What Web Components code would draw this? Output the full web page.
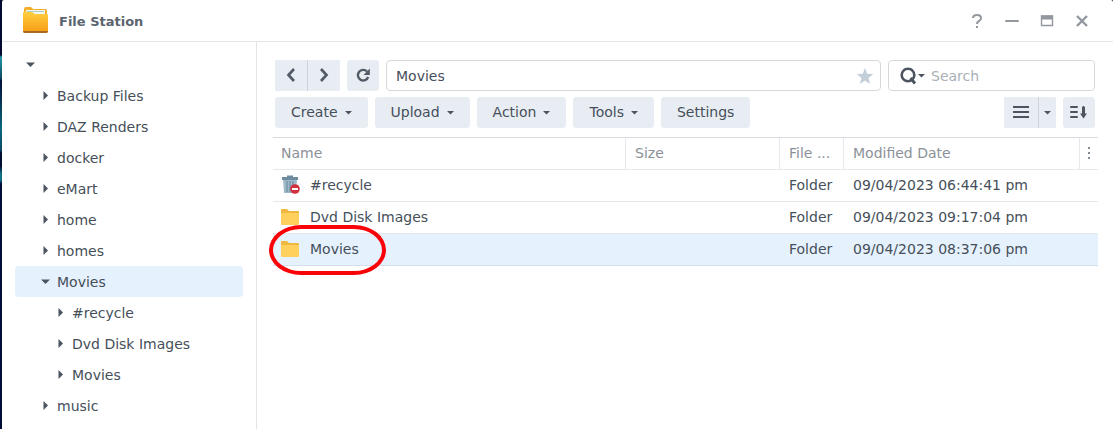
<!DOCTYPE html>
<html lang="en">
<head>
<meta charset="utf-8">
<meta name="viewport" content="width=device-width, initial-scale=1">
<title>File Station</title>
<style>
	body {
		margin: 0;
		min-height: 100vh;
		display: flex;
		font-family: "DejaVu Sans", Verdana, sans-serif;
		font-size: 14px;
		color: #464f59;
		background: linear-gradient(#020a33 0 55px, #2396aa 57px, #0d4a63 78px, #00103a 81px, #083050 100px, #0a6680 128px, #0a4a68 150px, #000c30 153px 166px, #0f7088 174px 180px, #000c38 184px);
	}

	fs-window {
		flex: 1;
		margin-left: 2px;
	}
</style>
</head>
<body>
	<fs-window heading="File Station">
		<fs-tree slot="sidebar">
			<fs-tree-item level="0" open></fs-tree-item>
			<fs-tree-item level="1">Backup Files</fs-tree-item>
			<fs-tree-item level="1">DAZ Renders</fs-tree-item>
			<fs-tree-item level="1">docker</fs-tree-item>
			<fs-tree-item level="1">eMart</fs-tree-item>
			<fs-tree-item level="1">home</fs-tree-item>
			<fs-tree-item level="1">homes</fs-tree-item>
			<fs-tree-item level="1" open selected>Movies</fs-tree-item>
			<fs-tree-item level="2">#recycle</fs-tree-item>
			<fs-tree-item level="2">Dvd Disk Images</fs-tree-item>
			<fs-tree-item level="2">Movies</fs-tree-item>
			<fs-tree-item level="1">music</fs-tree-item>
		</fs-tree>
		<fs-toolbar></fs-toolbar>
		<fs-file-table></fs-file-table>
	</fs-window>

<script>
	const icons = {
		app: [27, 27, `
			<defs>
				<linearGradient id="front" x1="0" y1="0" x2="0" y2="1">
					<stop offset="0" stop-color="#ffcf40"/>
					<stop offset="1" stop-color="#f79a12"/>
				</linearGradient>
			</defs>
			<path d="M2 2q0-2 2-2h5l2 2h12q2 0 2 2v18H2z" fill="#f2ad2c"/>
			<path d="M4 3h19v6H4z" fill="#f3f8ee"/>
			<path d="M5 4.500h17" stroke="#a8cfc0" stroke-width="1"/>
			<path d="M1 6q0-1 1-1h8l3 2h12q1 0 1 1v16q0 2-2 2H3q-2 0-2-2z" fill="url(#front)"/>
			<path d="M1 24h25q0 2-2 2H3q-2 0-2-2z" fill="#a66b22"/>`],
		help: [14, 16, '<path d="M3 5q0-3 4-3t4 3q0 2-2 3t-2 3M7 13v2" fill="none" stroke="#92989e" stroke-width="2"/>'],
		minimize: [14, 16, '<path d="M1 8h12" stroke="#92989e" stroke-width="2" stroke-linecap="round"/>'],
		maximize: [14, 16, '<path d="M1.500 3h11v9.500h-11z" fill="#fff" stroke="#92989e" stroke-width="1.400"/><path d="M1 2.500h12v4H1z" fill="#92989e"/>'],
		close: [14, 16, '<path d="M2 3l10 10m0-10L2 13" stroke="#92989e" stroke-width="2.400"/>'],
		down: [9, 9, '<path d="M0 2.500h9L4.500 7z" fill="#4c555f"/>'],
		right: [9, 9, '<path d="M2.500 0L7 4.500 2.500 9z" fill="#4c555f"/>'],
		caret: [7, 5, '<path d="M0 1h7L3.500 4.500z" fill="#4c555f"/>'],
		back: [16, 16, '<path d="M11 2L5.500 8l5.500 6" fill="none" stroke="#535c66" stroke-width="2.700"/>'],
		forward: [16, 16, '<path d="M5 2l5.500 6L5 14" fill="none" stroke="#535c66" stroke-width="2.700"/>'],
		refresh: [16, 16, '<path d="M12 4.500A5.300 5.300 0 1 0 13.200 10" fill="none" stroke="#535c66" stroke-width="2.400"/><path d="M14.800 1.500V8H8.500z" fill="#535c66"/>'],
		star: [18, 18, '<path d="M9 1l2.200 5.700 6 .3-4.700 3.900 1.600 6L9 13.500l-5.100 3.400 1.600-6L.8 7l6-.3z" fill="#c3ced8"/>'],
		search: [17, 18, '<circle cx="8" cy="8" r="6.300" fill="none" stroke="#4c555f" stroke-width="2.600"/><path d="M10.500 11l4.500 5.500" stroke="#4c555f" stroke-width="2.800"/>'],
		list: [16, 14, '<path d="M0 2h16M0 7h16M0 12h16" stroke="#4c555f" stroke-width="2"/>'],
		sort: [18, 14, '<path d="M1 2h6M1 7h6M1 12h6" stroke="#4c555f" stroke-width="2" stroke-linecap="round"/><path d="M13.500 2.500v7" stroke="#4c555f" stroke-width="3" stroke-linecap="round"/><path d="M10 8.500h7L13.500 13.500z" fill="#4c555f"/>'],
		more: [3, 13, '<path d="M0 1h2v2H0zm0 5h2v2H0zm0 5h2v2H0z" fill="#858c93"/>'],
		folder: [18, 16, '<path d="M0 1q0-1 1-1h5l2 2h9q1 0 1 1v11H0z" fill="#efb93f"/><path d="M0 4h18v11q0 1-1 1H1q-1 0-1-1z" fill="#ffd05b"/>'],
		recycle: [19, 19, `
			<path d="M2 4h14l-1 14H3z" fill="#9fb9c9"/>
			<path d="M6 6v11M9 6v11M12 6v11" stroke="#7896a9" stroke-width="1.500"/>
			<path d="M1 2h5V.500h6V2h5v3H1z" fill="#6e8c9f"/>
			<circle cx="14" cy="14" r="4.800" fill="#d22f3c"/>
			<path d="M11 14h6" stroke="#fff" stroke-width="2"/>`]
	}

	class FsIcon extends HTMLElement {
		connectedCallback () {
			if (this.shadowRoot) return
			const [width, height, shapes] = icons[this.getAttribute('name')]
			this.attachShadow({ mode: 'open' }).innerHTML = `
				<style>
					:host { display: inline-flex; flex: none; }
					svg { display: block; }
				</style>
				<svg width="${width}" height="${height}" viewBox="0 0 ${width} ${height}" aria-hidden="true">${shapes}</svg>
			`
		}
	}
	customElements.define('fs-icon', FsIcon)

	class FsWindow extends HTMLElement {
		constructor () {
			super()
			this.attachShadow({ mode: 'open' }).innerHTML = `
				<style>
					:host {
						display: flex;
						flex-direction: column;
						background: #fff;
						border-radius: 2px 2px 0 0;
						overflow: hidden;
					}

					header {
						display: flex;
						align-items: center;
						height: 41px;
						padding: 0 24px 0 20px;
						border-bottom: 1px solid #e1e3e6;
					}

					h1 {
						flex: 1;
						margin: 0 0 0 10px;
						font-size: 13px;
						line-height: 20px;
						color: #5c656f;
						padding-top: 2px;
					}

					nav {
						display: flex;
						gap: 21px;
					}

					nav button {
						display: flex;
						padding: 0;
						border: 0;
						background: none;
					}

					.content {
						flex: 1;
						display: flex;
					}

					aside {
						flex: 0 0 254px;
						border-right: 1px solid #e1e3e6;
					}

					main {
						flex: 1;
						min-width: 0;
						padding: 18px 15px 0 16px;
					}
				</style>

				<header>
					<fs-icon name="app"></fs-icon>
					<h1></h1>
					<nav>
						<button aria-label="Help"><fs-icon name="help"></fs-icon></button>
						<button aria-label="Minimize"><fs-icon name="minimize"></fs-icon></button>
						<button aria-label="Maximize"><fs-icon name="maximize"></fs-icon></button>
						<button aria-label="Close"><fs-icon name="close"></fs-icon></button>
					</nav>
				</header>
				<div class="content">
					<aside><slot name="sidebar"></slot></aside>
					<main><slot></slot></main>
				</div>
			`
		}

		connectedCallback () {
			this.shadowRoot.querySelector('h1').textContent = this.getAttribute('heading')
		}
	}
	customElements.define('fs-window', FsWindow)

	class FsTree extends HTMLElement {
		constructor () {
			super()
			this.attachShadow({ mode: 'open' }).innerHTML = `
				<style>
					:host { display: block; padding: 7px 13px 0; }
				</style>
				<slot></slot>
			`
		}
	}
	customElements.define('fs-tree', FsTree)

	class FsTreeItem extends HTMLElement {
		connectedCallback () {
			if (this.shadowRoot) return
			const arrow = this.hasAttribute('open') ? 'down' : 'right'
			const indent = 11 + Number(this.getAttribute('level')) * 15
			this.attachShadow({ mode: 'open' }).innerHTML = `
				<style>
					:host { display: block; }

					button {
						display: flex;
						align-items: center;
						gap: 7px;
						width: 100%;
						height: 31px;
						padding: 0 0 0 ${indent}px;
						border: 0;
						border-radius: 4px;
						background: none;
						font: inherit;
						color: inherit;
					}

					:host([selected]) button { background: #e5f1fd; }
				</style>
				<button><fs-icon name="${arrow}"></fs-icon><slot></slot></button>
			`
		}
	}
	customElements.define('fs-tree-item', FsTreeItem)

	class FsButton extends HTMLElement {
		connectedCallback () {
			if (this.shadowRoot) return
			const caret = this.hasAttribute('menu') ? '<fs-icon name="caret"></fs-icon>' : ''
			const label = this.hasAttribute('label') ? `aria-label="${this.getAttribute('label')}"` : ''
			this.attachShadow({ mode: 'open' }).innerHTML = `
				<style>
					:host { display: block; }

					button {
						display: flex;
						align-items: center;
						justify-content: center;
						gap: 7px;
						width: 100%;
						height: 31px;
						padding: 0 var(--button-padding, 16px) 1px;
						border: 0;
						border-radius: var(--button-radius, 3px);
						background: #e8edf4;
						font: inherit;
						color: inherit;
					}
				</style>
				<button ${label}><slot></slot>${caret}</button>
			`
		}
	}
	customElements.define('fs-button', FsButton)

	class FsToolbar extends HTMLElement {
		constructor () {
			super()
			this.attachShadow({ mode: 'open' }).innerHTML = `
				<style>
					:host {
						display: flex;
						flex-direction: column;
						gap: 6px;
						padding: 0 3px 9px 2px;
					}

					.row, .actions {
						display: flex;
						gap: 7px;
					}

					.actions { flex: 1; }

					.pair {
						display: flex;
						gap: 1px;
						border-radius: 3px;
						background: #cdd3da;
						overflow: hidden;
						--button-radius: 0;
					}

					.icon {
						width: 32px;
						--button-padding: 0;
					}

					.wide { width: 34px; }
					.narrow { width: 17px; }

					.field {
						display: flex;
						align-items: center;
						box-sizing: border-box;
						min-width: 0;
						height: 31px;
						border: 1px solid #d5d9de;
						border-radius: 4px;
						padding: 0 6px 0 9px;
					}

					.path { flex: 1; }

					.search {
						flex: 0 0 207px;
						gap: 2px;
						padding-left: 11px;
					}

					input {
						flex: 1;
						min-width: 0;
						padding: 0;
						border: 0;
						outline: 0;
						background: none;
						font: inherit;
						color: inherit;
					}

					.search input { margin-left: 4px; }

					::placeholder { color: #a9b0b8; opacity: 1; }

					.field button {
						display: flex;
						align-items: center;
						gap: 1px;
						padding: 0;
						border: 0;
						background: none;
					}
				</style>

				<div class="row">
					<div class="pair">
						<fs-button class="icon" label="Back"><fs-icon name="back"></fs-icon></fs-button>
						<fs-button class="icon" label="Forward"><fs-icon name="forward"></fs-icon></fs-button>
					</div>
					<fs-button class="icon" label="Refresh"><fs-icon name="refresh"></fs-icon></fs-button>
					<div class="field path">
						<input type="text" value="Movies" aria-label="Path">
						<button aria-label="Favorite"><fs-icon name="star"></fs-icon></button>
					</div>
					<div class="field search">
						<button aria-label="Search options"><fs-icon name="search"></fs-icon><fs-icon name="caret"></fs-icon></button>
						<input type="text" placeholder="Search" aria-label="Search">
					</div>
				</div>
				<div class="row">
					<div class="actions">
						<fs-button menu>Create</fs-button>
						<fs-button menu>Upload</fs-button>
						<fs-button menu>Action</fs-button>
						<fs-button menu>Tools</fs-button>
						<fs-button>Settings</fs-button>
					</div>
					<div class="pair">
						<fs-button class="icon wide" label="List view"><fs-icon name="list"></fs-icon></fs-button>
						<fs-button class="icon narrow" label="View options"><fs-icon name="caret"></fs-icon></fs-button>
					</div>
					<fs-button class="icon" label="Sort"><fs-icon name="sort"></fs-icon></fs-button>
				</div>
			`
		}
	}
	customElements.define('fs-toolbar', FsToolbar)

	const files = [
		{ icon: 'recycle', name: '#recycle', type: 'Folder', date: '09/04/2023 06:44:41 pm' },
		{ icon: 'folder', name: 'Dvd Disk Images', type: 'Folder', date: '09/04/2023 09:17:04 pm' },
		{ icon: 'folder', name: 'Movies', type: 'Folder', date: '09/04/2023 08:37:06 pm', selected: true }
	]

	class FsFileTable extends HTMLElement {
		constructor () {
			super()
			this.attachShadow({ mode: 'open' }).innerHTML = `
				<style>
					:host { display: block; }

					table {
						width: 100%;
						table-layout: fixed;
						border-collapse: separate;
						border-spacing: 0;
						border-top: 1px solid #d8dce0;
					}

					th, td {
						box-sizing: border-box;
						height: 32px;
						padding: 0 0 2px 9px;
						border-bottom: 1px solid #e6e8eb;
						text-align: left;
						font-weight: normal;
						white-space: nowrap;
					}

					th {
						color: #8b9198;
						border-left: 1px solid #e6e8eb;
					}

					td { padding-left: 10px; }
					th:first-child { border-left: 0; }
					th:first-child, td:first-child { padding-left: 8px; }
					th:last-child { padding-left: 8px; }
					th button { display: flex; padding: 0; border: 0; background: none; }

					.size { width: 154px; }
					.type { width: 64px; }
					.date { width: 236px; }
					.menu { width: 19px; }

					.name {
						position: relative;
						display: flex;
						align-items: center;
						gap: 10px;
					}

					.name fs-icon {
						width: 19px;
					}

					.selected td {
						background: #e5f1fd;
						border-bottom-color: #d3e0eb;
					}

					/* red marker round the current folder */
					.selected .name::after {
						content: "";
						position: absolute;
						box-sizing: border-box;
						left: -12px;
						top: -16px;
						width: 117px;
						height: 50px;
						border: 4px solid #f80408;
						border-radius: 32px / 25px;
						pointer-events: none;
					}
				</style>

				<table>
					<thead>
						<tr>
							<th>Name</th>
							<th class="size">Size</th>
							<th class="type">File ...</th>
							<th class="date">Modified Date</th>
							<th class="menu"><button aria-label="Columns"><fs-icon name="more"></fs-icon></button></th>
						</tr>
					</thead>
					<tbody>
						${files.map(file => `
							<tr class="${file.selected ? 'selected' : ''}">
								<td><div class="name"><fs-icon name="${file.icon}"></fs-icon>${file.name}</div></td>
								<td></td>
								<td>${file.type}</td>
								<td colspan="2">${file.date}</td>
							</tr>
						`).join('')}
					</tbody>
				</table>
			`
		}
	}
	customElements.define('fs-file-table', FsFileTable)
</script>
</body>
</html>
